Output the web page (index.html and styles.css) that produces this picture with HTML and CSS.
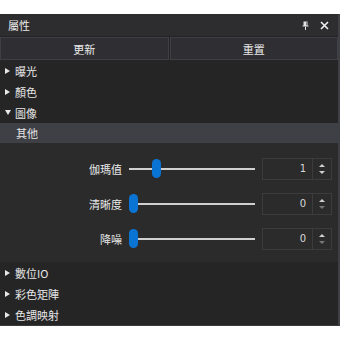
FILE: index.html
```html
<!DOCTYPE html>
<html>

<head>
    <link rel="stylesheet" href="styles.css">
</head>

<body>
    <main class="panel">
        <section class="titlebar">
            <span class="title">屬性</span>
            <div class="tools">
                <svg width="7" height="9" viewBox="0 0 7 9">
                    <path d="M1.5 0.5h4v4h1v1h-6v-1h1z" fill="#e0e0e0" />
                    <rect x="3" y="5.5" width="1" height="3.5" fill="#e0e0e0" />
                    <rect x="4" y="1" width="1" height="3.5" fill="#888" />
                </svg>
                <svg width="9" height="9" viewBox="0 0 9 9">
                    <path d="M1 1l7 7M8 1l-7 7" stroke="#f0f0f0" stroke-width="1.6" />
                </svg>
            </div>
        </section>
        <section class="buttons">
            <button class="btn">更新</button>
            <button class="btn">重置</button>
        </section>
        <div class="row"><i class="tri right"></i>曝光</div>
        <div class="row"><i class="tri right"></i>顏色</div>
        <div class="row"><i class="tri down"></i>圖像</div>
        <div class="subhead">其他</div>
        <section class="controls">
            <div class="ctrl">
                <label class="label">伽瑪值</label>
                <div class="slider">
                    <div class="track"></div>
                    <div class="thumb" style="left: 23px"></div>
                </div>
                <div class="spin">
                    <span class="val">1</span>
                    <span class="arrows"><i class="up"></i><i class="dn"></i></span>
                </div>
            </div>
            <div class="ctrl">
                <label class="label">清晰度</label>
                <div class="slider">
                    <div class="track"></div>
                    <div class="thumb" style="left: 0px"></div>
                </div>
                <div class="spin">
                    <span class="val">0</span>
                    <span class="arrows"><i class="up"></i><i class="dn off"></i></span>
                </div>
            </div>
            <div class="ctrl">
                <label class="label">降噪</label>
                <div class="slider">
                    <div class="track"></div>
                    <div class="thumb" style="left: 0px"></div>
                </div>
                <div class="spin">
                    <span class="val">0</span>
                    <span class="arrows"><i class="up"></i><i class="dn off"></i></span>
                </div>
            </div>
        </section>
        <div class="row"><i class="tri right"></i>數位IO</div>
        <div class="row"><i class="tri right"></i>彩色矩陣</div>
        <div class="row"><i class="tri right"></i>色調映射</div>
    </main>
</body>

</html>
```

FILE: styles.css
```css
* {
    margin: 0;
    padding: 0;
    box-sizing: border-box;
}

body {
    background-color: #fff;
    font-family: "Noto Sans CJK TC", "DejaVu Sans", sans-serif;
}

main.panel {
    margin-top: 14px;
    height: 312px;
    background-color: #252526;
    border-right: 2px solid #3f3f46;
    border-bottom: 1px solid #3a3a3d;
    color: #e8e8e8;
    font-size: 11px;
    display: flex;
    flex-direction: column;
}

.titlebar {
    height: 23px;
    flex: none;
    background-color: #2d2d30;
    border-bottom: 1px solid #232325;
    display: flex;
    align-items: center;
    justify-content: space-between;
    padding: 0 8px;
    line-height: 14px;
}

.tools {
    display: flex;
    align-items: center;
    gap: 11px;
    padding-right: 1px;
}

.buttons {
    height: 23px;
    flex: none;
    display: flex;
}

.btn {
    flex: 1;
    background-color: #2f2f33;
    border: 1px solid #3f3f46;
    color: #e8e8e8;
    font-family: inherit;
    font-size: 11px;
    line-height: 14px;
}

.btn + .btn {
    margin-left: 1px;
}

.row {
    height: 21px;
    flex: none;
    display: flex;
    align-items: center;
    padding-left: 5px;
    gap: 4px;
    line-height: 14px;
}

.tri {
    width: 0;
    height: 0;
    border-style: solid;
}

.tri.right {
    border-width: 3.5px 0 3.5px 5px;
    border-color: transparent transparent transparent #e8e8e8;
    margin-right: 1px;
}

.tri.down {
    border-width: 5px 3.5px 0 3.5px;
    border-color: #e8e8e8 transparent transparent transparent;
}

.subhead {
    height: 20px;
    flex: none;
    display: flex;
    align-items: center;
    padding-left: 16px;
    background-color: #3f3f46;
    line-height: 14px;
}

.controls {
    height: 119px;
    flex: none;
    background-color: #2b2b2c;
    padding-top: 8px;
}

.ctrl {
    height: 35px;
    display: flex;
    align-items: center;
}

.label {
    width: 122px;
    text-align: right;
    line-height: 14px;
}

.slider {
    position: relative;
    width: 126px;
    height: 19px;
    margin: 0 7px;
    display: flex;
    align-items: center;
}

.track {
    width: 100%;
    height: 2px;
    background-color: #d0d0d0;
}

.thumb {
    position: absolute;
    top: 0;
    width: 9px;
    height: 19px;
    border-radius: 4.5px;
    background-color: #0a74d4;
}

.spin {
    width: 70px;
    height: 22px;
    border: 1px solid #3c3c3e;
    display: flex;
}

.val {
    flex: 1;
    text-align: right;
    padding-right: 6px;
    font-family: "DejaVu Sans", sans-serif;
    font-size: 10px;
    line-height: 20px;
    color: #d8d8d8;
}

.arrows {
    width: 19px;
    border-left: 1px solid #3c3c3e;
    display: flex;
    flex-direction: column;
    align-items: center;
    justify-content: center;
    gap: 4px;
}

.up,
.dn {
    width: 0;
    height: 0;
    border-style: solid;
}

.up {
    border-width: 0 3px 3px 3px;
    border-color: transparent transparent #cfcfcf transparent;
}

.dn {
    border-width: 3px 3px 0 3px;
    border-color: #cfcfcf transparent transparent transparent;
}

.dn.off {
    border-top-color: #77777a;
}
```
